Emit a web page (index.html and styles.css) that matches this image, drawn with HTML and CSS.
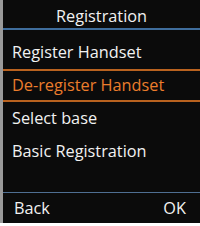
FILE: index.html
```html
<!DOCTYPE html>
<html>
<head>
<meta name="viewport" content="width=device-width, initial-scale=1">
<link rel="stylesheet" href="styles.css">
</head>
<body>

<div class="screen">
  <div class="title">Registration</div>
  <div class="menu">
    <div class="item">Register Handset</div>
    <div class="item selected">De-register Handset</div>
    <div class="item">Select base</div>
    <div class="item">Basic Registration</div>
  </div>
  <div class="softkeys">
    <span>Back</span>
    <span>OK</span>
  </div>
</div>

</body>
</html>
```

FILE: styles.css
```css
html, body {
    margin: 0;
    background-color: #fff;
}

body {
    font-family: "Open Sans", "DejaVu Sans", sans-serif;
}

.screen {
    display: flex;
    flex-direction: column;
    width: 197px;
    height: 223px;
    border-left: 3px solid #9a9a9a;
    background-color: #0b0b0b;
    color: #f2f2f2;
    font-size: 16.3px;
}

.title {
    height: 26px;
    padding-top: 2px;
    line-height: 28px;
    text-align: center;
    border-bottom: 2px solid #3f6d9c;
}

.menu {
    flex: 1;
    padding-top: 6px;
}

.item {
    height: 33px;
    line-height: 33px;
    padding-left: 9px;
}

.item.selected {
    height: 29px;
    line-height: 29px;
    color: #ec7d2c;
    border-top: 2px solid #b9621f;
    border-bottom: 2px solid #b9621f;
}

.softkeys {
    display: flex;
    justify-content: space-between;
    height: 30px;
    line-height: 30px;
    padding: 0 14px 0 11px;
    border-top: 1px solid #4f6f92;
}
```
